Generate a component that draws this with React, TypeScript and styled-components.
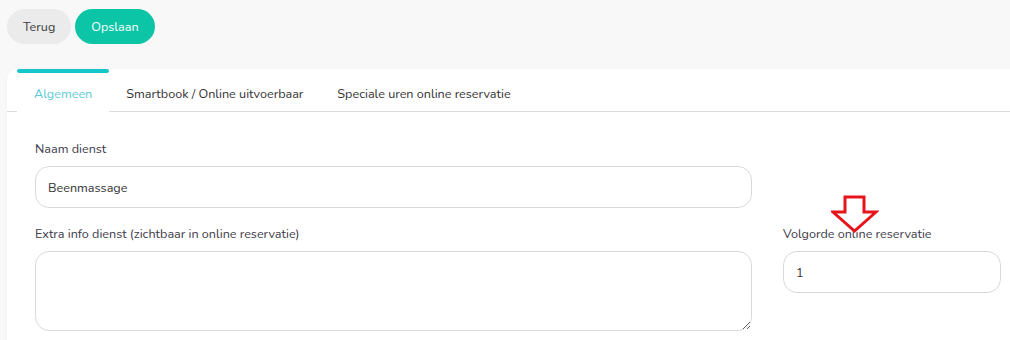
import React from "react";
import styled, { createGlobalStyle } from "styled-components";

const Global = createGlobalStyle`
  html, body {
    margin: 0;
    padding: 0;
    background: #f8f8f8;
    overflow: hidden;
    font-family: "Nunito", "Lato", "Noto Sans", sans-serif;
  }
`;

const Page = styled.div`
  width: 1010px;
  height: 340px;
  overflow: hidden;
`;

const Toolbar = styled.div`
  display: flex;
  gap: 4px;
  padding: 9px 7px 0;
  height: 35px;
`;

const Button = styled.button<{ $primary?: boolean }>`
  height: 35px;
  padding: 0 16px;
  border: none;
  border-radius: 18px;
  font-family: inherit;
  font-size: 12.6px;
  background: ${(p) => (p.$primary ? "#0cc5a6" : "#ebebeb")};
  color: ${(p) => (p.$primary ? "#ffffff" : "#3a3a3a")};
  cursor: pointer;
`;

const Card = styled.div`
  margin: 25px 0 0 7px;
  width: 1040px;
  background: #ffffff;
  border-top-left-radius: 10px;
  box-shadow: 0 0 3px rgba(0, 0, 0, 0.04);
  height: 280px;
`;

const TabBar = styled.div`
  display: flex;
  padding-left: 10px;
  border-bottom: 1px solid #dcdcdc;
`;

const Tab = styled.div<{ $active?: boolean }>`
  position: relative;
  box-sizing: border-box;
  height: 43px;
  padding: 6px 17px 0;
  display: flex;
  align-items: center;
  font-size: 12.6px;
  color: ${(p) => (p.$active ? "#5ccbd6" : "#333333")};
  background: ${(p) => (p.$active ? "#ffffff" : "transparent")};
  margin-bottom: -1px;
  &::before {
    content: "";
    display: ${(p) => (p.$active ? "block" : "none")};
    position: absolute;
    left: 0;
    right: 0;
    top: 0;
    height: 4px;
    border-radius: 2px;
    background: #15c7c8;
  }
`;

const Form = styled.div`
  display: grid;
  grid-template-columns: 717px 218px;
  column-gap: 31px;
  row-gap: 17px;
  padding: 28px 0 0 28px;
`;

const Field = styled.div`
  position: relative;
  display: flex;
  flex-direction: column;
`;

const Label = styled.label`
  font-size: 12.6px;
  line-height: 18px;
  color: #3d3b48;
  margin-bottom: 8px;
`;

const Input = styled.input`
  box-sizing: border-box;
  height: 42px;
  border: 1px solid #d9d9d9;
  border-radius: 14px;
  padding: 0 12px;
  font-family: inherit;
  font-size: 12.6px;
  color: #333333;
  outline: none;
  background: #ffffff;
`;

const TextArea = styled.textarea`
  box-sizing: border-box;
  height: 80px;
  border: 1px solid #d9d9d9;
  border-radius: 14px;
  padding: 10px 12px;
  font-family: inherit;
  font-size: 12.6px;
  outline: none;
`;

const Arrow = styled.svg`
  position: absolute;
  left: 48px;
  top: -30px;
  width: 48px;
  height: 38px;
  pointer-events: none;
`;

export default function App() {
  return (
    <>
      <Global />
      <Page>
        <Toolbar>
          <Button>Terug</Button>
          <Button $primary>Opslaan</Button>
        </Toolbar>
        <Card>
          <TabBar>
            <Tab $active>Algemeen</Tab>
            <Tab>Smartbook / Online uitvoerbaar</Tab>
            <Tab>Speciale uren online reservatie</Tab>
          </TabBar>
          <Form>
            <Field>
              <Label>Naam dienst</Label>
              <Input defaultValue="Beenmassage" />
            </Field>
            <div />
            <Field>
              <Label>Extra info dienst (zichtbaar in online reservatie)</Label>
              <TextArea />
            </Field>
            <Field>
              <Label>Volgorde online reservatie</Label>
              <Input defaultValue="1" />
              <Arrow viewBox="0 0 48 38">
                <path
                  d="M14 2 H33 V17 H45 L23.5 36 L2 17 H14 Z"
                  fill="none"
                  stroke="#e8141c"
                  strokeWidth="3"
                  strokeLinejoin="miter"
                />
              </Arrow>
            </Field>
          </Form>
        </Card>
      </Page>
    </>
  );
}
